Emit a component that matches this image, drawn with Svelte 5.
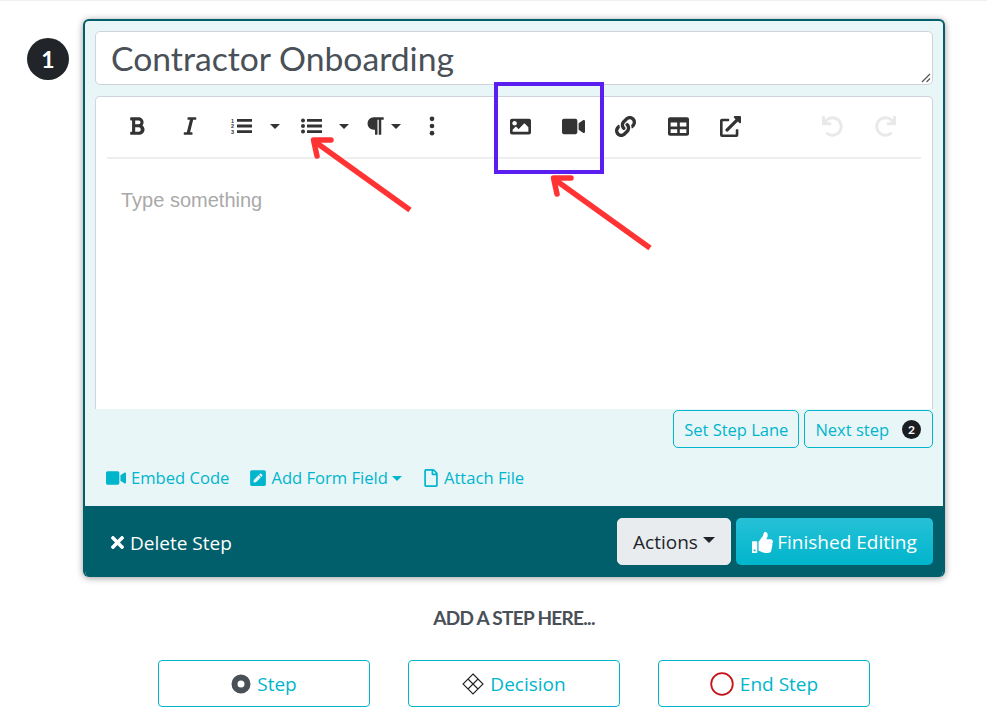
<script lang="ts">
	const addButtons = [
		{ label: "Step", kind: "step" },
		{ label: "Decision", kind: "decision" },
		{ label: "End Step", kind: "end" }
	];
</script>

{#snippet fa(cls: string, box: string, d: string)}
	<svg class={cls} viewBox={box} aria-hidden="true"><path fill="currentColor" d={d} /></svg>
{/snippet}

{#snippet video(cls: string)}
	{@render fa(cls, "0 0 576 512", "M336.2 64H47.8C21.4 64 0 85.4 0 111.8v288.4C0 426.6 21.4 448 47.8 448h288.4c26.4 0 47.8-21.4 47.8-47.8V111.8c0-26.4-21.4-47.8-47.8-47.8zm189.4 37.7L416 177.3v157.4l109.6 75.5c21.2 14.6 50.4-.3 50.4-25.8V127.5c0-25.4-29.1-40.4-50.4-25.8z")}
{/snippet}

<div class="page">
	<div class="step-row">
		<div class="step-num">1</div>
		<div class="card">
			<div class="card-body">
				<div class="title-box">
					<span class="title">Contractor Onboarding</span>
					<svg class="grip" viewBox="0 0 10 10" aria-hidden="true">
						<path d="M1 9 9 1M5.5 9 9 5.5" stroke="#555" stroke-width="1.2" fill="none" />
					</svg>
				</div>
				<div class="editor">
					<div class="toolbar">
						<span class="tb">{@render fa("ic", "0 0 384 512", "M333.49 238a122 122 0 0 0 27-65.21C367.87 96.49 308 32 233.42 32H34a16 16 0 0 0-16 16v48a16 16 0 0 0 16 16h31.87v288H34a16 16 0 0 0-16 16v48a16 16 0 0 0 16 16h209.32c70.8 0 134.14-51.75 141-122.4 4.74-48.45-16.39-90.89-50.83-117.6zM145.66 112h87.76a48 48 0 0 1 0 96h-87.76zm87.76 288h-87.76V288h87.76a56 56 0 0 1 0 112z")}</span>
						<span class="tb">{@render fa("ic", "0 0 320 512", "M320 48v32a16 16 0 0 1-16 16h-62.76l-80 320H208a16 16 0 0 1 16 16v32a16 16 0 0 1-16 16H16a16 16 0 0 1-16-16v-32a16 16 0 0 1 16-16h62.76l80-320H112a16 16 0 0 1-16-16V48a16 16 0 0 1 16-16h192a16 16 0 0 1 16 16z")}</span>
						<span class="tb tb-ol">
							<svg class="ic-list" viewBox="0 0 21 16" aria-hidden="true">
								<text x="0" y="5" class="nums">1</text>
								<text x="0" y="10.4" class="nums">2</text>
								<text x="0" y="15.8" class="nums">3</text>
								<path d="M6 1h15v2.800H6zM6 6.600h15v2.800H6zM6 12.200h15v2.800H6z" fill="currentColor" />
							</svg>
							<i class="tb-caret"></i>
						</span>
						<span class="tb tb-ul">
							<svg class="ic-list" viewBox="0 0 21 16" aria-hidden="true">
								<path d="M6 1h15v2.800H6zM6 6.600h15v2.800H6zM6 12.200h15v2.800H6z" fill="currentColor" />
								<circle cx="2" cy="2.400" r="2" fill="currentColor" />
								<circle cx="2" cy="8" r="2" fill="currentColor" />
								<circle cx="2" cy="13.600" r="2" fill="currentColor" />
							</svg>
							<i class="tb-caret"></i>
						</span>
						<span class="tb tb-p">
							{@render fa("ic", "0 0 448 512", "M448 48v32a16 16 0 0 1-16 16h-48v368a16 16 0 0 1-16 16h-32a16 16 0 0 1-16-16V96h-32v368a16 16 0 0 1-16 16h-32a16 16 0 0 1-16-16V352h-32a160 160 0 0 1 0-320h240a16 16 0 0 1 16 16z")}
							<i class="tb-caret"></i>
						</span>
						<span class="tb tb-dots">
							<svg class="ic" viewBox="0 0 192 512" aria-hidden="true">
								<circle cx="96" cy="72" r="60" fill="currentColor" />
								<circle cx="96" cy="256" r="60" fill="currentColor" />
								<circle cx="96" cy="440" r="60" fill="currentColor" />
							</svg>
						</span>
						<span class="tb">{@render fa("ic-wide", "0 0 512 512", "M464 448H48c-26.51 0-48-21.49-48-48V112c0-26.51 21.49-48 48-48h416c26.51 0 48 21.49 48 48v288c0 26.51-21.49 48-48 48zM112 120c-30.928 0-56 25.072-56 56s25.072 56 56 56 56-25.072 56-56-25.072-56-56-56zM64 384h384V272l-87.515-87.515c-4.686-4.686-12.284-4.686-16.971 0L208 320l-55.515-55.515c-4.686-4.686-12.284-4.686-16.971 0L64 336v48z")}</span>
						<span class="tb">{@render video("ic-video")}</span>
						<span class="tb">{@render fa("ic-wide", "0 0 512 512", "M326.612 185.391c59.747 59.809 58.927 155.698.36 214.59-.11.12-.24.25-.36.37l-67.2 67.2c-59.27 59.27-155.699 59.262-214.96 0-59.27-59.26-59.27-155.7 0-214.96l37.106-37.106c9.84-9.84 26.786-3.3 27.294 10.606.648 17.722 3.826 35.527 9.69 52.721 1.986 5.822.567 12.262-3.783 16.612l-13.087 13.087c-28.026 28.026-28.905 73.66-1.155 101.96 28.024 28.579 74.086 28.749 102.325.51l67.2-67.19c28.191-28.191 28.073-73.757 0-101.83-3.701-3.694-7.429-6.564-10.341-8.569a16.037 16.037 0 0 1-6.947-12.606c-.396-10.567 3.348-21.456 11.698-29.806l21.054-21.055c5.521-5.521 14.182-6.199 20.584-1.731a152.482 152.482 0 0 1 20.522 17.197zM467.547 44.449c-59.261-59.262-155.69-59.27-214.96 0l-67.2 67.2c-.12.12-.25.25-.36.37-58.566 58.892-59.387 154.781.36 214.59a152.454 152.454 0 0 0 20.521 17.196c6.402 4.468 15.064 3.789 20.584-1.731l21.054-21.055c8.35-8.35 12.094-19.239 11.698-29.806a16.037 16.037 0 0 0-6.947-12.606c-2.912-2.005-6.64-4.875-10.341-8.569-28.073-28.073-28.191-73.639 0-101.83l67.2-67.19c28.239-28.239 74.3-28.069 102.325.51 27.75 28.3 26.872 73.934-1.155 101.96l-13.087 13.087c-4.35 4.35-5.769 10.79-3.783 16.612 5.864 17.194 9.042 34.999 9.69 52.721.509 13.906 17.454 20.446 27.294 10.606l37.106-37.106c59.271-59.259 59.271-155.699.001-214.959z")}</span>
						<span class="tb">{@render fa("ic-wide", "0 0 512 512", "M464 32H48C21.49 32 0 53.49 0 80v352c0 26.51 21.49 48 48 48h416c26.51 0 48-21.49 48-48V80c0-26.51-21.49-48-48-48zM224 416H64v-96h160v96zm0-160H64v-96h160v96zm224 160H288v-96h160v96zm0-160H288v-96h160v96z")}</span>
						<span class="tb">{@render fa("ic-wide", "0 0 512 512", "M432,320H400a16,16,0,0,0-16,16V448H64V128H208a16,16,0,0,0,16-16V80a16,16,0,0,0-16-16H48A48,48,0,0,0,0,112V464a48,48,0,0,0,48,48H400a48,48,0,0,0,48-48V336A16,16,0,0,0,432,320ZM488,0h-128c-21.37,0-32.05,25.91-17,41l35.73,35.73L135,320.37a24,24,0,0,0,0,34L157.67,377a24,24,0,0,0,34,0L435.28,133.32,471,169c15,15,41,4.5,41-17V24A24,24,0,0,0,488,0Z")}</span>
						<span class="tb tb-off tb-undo">{@render fa("ic-wide", "0 0 512 512", "M212.333 224.333H12c-6.627 0-12-5.373-12-12V12C0 5.373 5.373 0 12 0h48c6.627 0 12 5.373 12 12v78.112C117.773 39.279 184.26 7.47 258.175 8.007c136.906.994 246.448 111.623 246.157 248.532C504.041 393.258 393.12 504 256.333 504c-64.089 0-122.496-24.313-166.51-64.215-5.099-4.622-5.334-12.554-.467-17.42l33.967-33.967c4.474-4.474 11.662-4.717 16.401-.525C170.76 415.336 211.58 432 256.333 432c97.268 0 176-78.716 176-176 0-97.267-78.716-176-176-176-58.496 0-110.28 28.476-142.274 72.333h98.274c6.627 0 12 5.373 12 12v48c0 6.627-5.373 12-12 12z")}</span>
						<span class="tb tb-off tb-redo">{@render fa("ic-wide", "0 0 512 512", "M212.333 224.333H12c-6.627 0-12-5.373-12-12V12C0 5.373 5.373 0 12 0h48c6.627 0 12 5.373 12 12v78.112C117.773 39.279 184.26 7.47 258.175 8.007c136.906.994 246.448 111.623 246.157 248.532C504.041 393.258 393.12 504 256.333 504c-64.089 0-122.496-24.313-166.51-64.215-5.099-4.622-5.334-12.554-.467-17.42l33.967-33.967c4.474-4.474 11.662-4.717 16.401-.525C170.76 415.336 211.58 432 256.333 432c97.268 0 176-78.716 176-176 0-97.267-78.716-176-176-176-58.496 0-110.28 28.476-142.274 72.333h98.274c6.627 0 12 5.373 12 12v48c0 6.627-5.373 12-12 12z")}</span>
					</div>
					<div class="placeholder">Type something</div>
				</div>
				<div class="step-actions">
					<button class="btn-line">Set Step Lane</button>
					<button class="btn-line btn-next">Next step <span class="next-num">2</span></button>
				</div>
				<div class="links">
					<span class="link">{@render video("link-video")}Embed Code</span>
					<span class="link">
						{@render fa("link-ic", "0 0 448 512", "M400 480H48c-26.5 0-48-21.5-48-48V80c0-26.5 21.5-48 48-48h352c26.5 0 48 21.5 48 48v352c0 26.5-21.5 48-48 48zM238.1 177.9L102.4 313.6l-6.3 57.1c-.8 7.6 5.6 14.1 13.3 13.3l57.1-6.3L302.2 242c2.3-2.3 2.3-6.1 0-8.5L246.7 178c-2.5-2.4-6.3-2.4-8.6-.1zM345 165.1L314.9 135c-9.4-9.4-24.6-9.4-33.9 0l-23.1 23.1c-2.3 2.3-2.3 6.1 0 8.5l55.5 55.5c2.3 2.3 6.1 2.3 8.5 0L345 199c9.3-9.3 9.3-24.5 0-33.9z")}
						Add Form Field<i class="link-caret"></i>
					</span>
					<span class="link">
						{@render fa("link-ic", "0 0 384 512", "M369.9 97.9L286 14C277 5 264.8-.1 252.1-.1H48C21.5 0 0 21.5 0 48v416c0 26.5 21.5 48 48 48h288c26.5 0 48-21.5 48-48V131.9c0-12.7-5.1-25-14.1-34zM332.1 128H256V51.9l76.1 76.1zM48 464V48h160v104c0 13.3 10.7 24 24 24h104v288H48z")}
						Attach File
					</span>
				</div>
			</div>
			<div class="card-foot">
				<span class="delete">
					{@render fa("del-ic", "0 0 352 512", "M242.72 256l100.07-100.07c12.28-12.28 12.28-32.19 0-44.48l-22.24-22.24c-12.28-12.28-32.19-12.28-44.48 0L176 189.28 75.93 89.21c-12.28-12.28-32.19-12.28-44.48 0L9.21 111.45c-12.28 12.28-12.28 32.19 0 44.48L109.28 256 9.21 356.07c-12.28 12.28-12.28 32.19 0 44.48l22.24 22.24c12.28 12.28 32.2 12.28 44.48 0L176 322.72l100.07 100.07c12.28 12.28 32.2 12.28 44.48 0l22.24-22.24c12.28-12.28 12.28-32.19 0-44.48L242.72 256z")}
					Delete Step
				</span>
				<div class="foot-btns">
					<button class="btn-actions">Actions<i class="act-caret"></i></button>
					<button class="btn-finish">
						{@render fa("thumb", "0 0 512 512", "M104 224H24c-13.255 0-24 10.745-24 24v240c0 13.255 10.745 24 24 24h80c13.255 0 24-10.745 24-24V248c0-13.255-10.745-24-24-24zM64 472c-13.255 0-24-10.745-24-24s10.745-24 24-24 24 10.745 24 24-10.745 24-24 24zM384 81.452c0 42.416-25.97 66.208-33.277 94.548h101.723c33.397 0 59.397 27.746 59.553 58.098.084 17.938-7.546 37.249-19.439 49.197l-.11.11c9.836 23.337 8.237 56.037-9.308 79.469 8.681 25.895-.069 57.704-16.382 74.757 4.298 17.598 2.244 32.575-6.148 44.632C440.202 511.587 389.616 512 346.839 512l-2.845-.001c-48.287-.017-87.806-17.598-119.56-31.725-15.957-7.099-36.821-15.887-52.651-16.178-6.54-.12-11.783-5.457-11.783-11.998v-213.77c0-3.2 1.282-6.271 3.558-8.521 39.614-39.144 56.648-80.587 89.117-113.111 14.804-14.832 20.188-37.236 25.393-58.902C282.515 39.293 291.817 0 312 0c24 0 72 8 72 81.452z")}
						Finished Editing
					</button>
				</div>
			</div>
		</div>
	</div>

	<div class="add-label">ADD A STEP HERE...</div>
	<div class="add-row">
		{#each addButtons as b}
			<button class="btn-add">
				{#if b.kind === "step"}
					<svg class="add-ic" viewBox="0 0 20 20" aria-hidden="true"><circle cx="10" cy="10" r="6.5" fill="none" stroke="#495057" stroke-width="6" /></svg>
				{:else if b.kind === "decision"}
					<svg class="add-ic add-ic-d" viewBox="0 0 22 22" aria-hidden="true">
						<path d="M11 1 21 11 11 21 1 11ZM6 6l10 10M16 6 6 16" fill="none" stroke="#222" stroke-width="1.1" />
					</svg>
				{:else}
					<svg class="add-ic add-ic-e" viewBox="0 0 24 24" aria-hidden="true"><circle cx="12" cy="12" r="10.800" fill="none" stroke="#c8131b" stroke-width="1.800" /></svg>
				{/if}
				{b.label}
			</button>
		{/each}
	</div>

	<svg class="notes" viewBox="0 0 987 717" aria-hidden="true">
		<rect x="496" y="84" width="106" height="88" fill="none" stroke="#5a1ff0" stroke-width="4" />
		<g fill="none" stroke="#ff3333" stroke-width="5.500" stroke-linejoin="round">
			<path d="M410 210 314 141" />
			<path d="M650 248 554 179" />
			<g stroke-linecap="round">
				<path d="M331 140H313.500L317 156" />
				<path d="M571 178H553.500L557 194" />
			</g>
		</g>
	</svg>
</div>

<style>
	:global(body) {
		background: #fff;
	}

	.page {
		position: relative;
		width: 987px;
		height: 717px;
		overflow: hidden;
		box-sizing: border-box;
		padding-top: 19px;
		border-top: 1px solid #f0f0f0;
		font-family: "Open Sans", sans-serif;
		font-size: 16.6px;
		color: #495057;
	}

	.step-row {
		display: flex;
		align-items: flex-start;
		padding-left: 27px;
		gap: 14px;
		margin-top: -1px;
	}

	.step-num {
		flex: none;
		width: 42px;
		height: 42px;
		margin-top: 19px;
		border-radius: 50%;
		background: #212529;
		color: #fff;
		font-family: Lato, sans-serif;
		font-weight: 700;
		font-size: 23px;
		display: flex;
		align-items: center;
		justify-content: center;
	}

	.card {
		width: 862px;
		height: 558px;
		box-sizing: border-box;
		display: flex;
		flex-direction: column;
		background: #e8f6f8;
		border: 2px solid #005f6b;
		border-bottom: 0;
		border-radius: 6px;
		box-shadow: 0 1px 7px rgba(0, 0, 0, 0.4);
		overflow: hidden;
	}

	.card-body {
		flex: 1;
		padding: 10px 10px 0;
		display: flex;
		flex-direction: column;
	}

	.title-box {
		position: relative;
		height: 54px;
		box-sizing: border-box;
		background: #fff;
		border: 1px solid #ced4da;
		border-radius: 5px;
		padding-left: 15px;
		display: flex;
		align-items: center;
	}

	.title {
		font-family: Lato, sans-serif;
		font-size: 33.700px;
		color: #495057;
	}

	.grip {
		position: absolute;
		right: 1px;
		bottom: 1px;
		width: 10px;
		height: 10px;
	}

	.editor {
		margin-top: 11px;
		height: 313px;
		box-sizing: border-box;
		background: #fff;
		border: 1px solid #ced4da;
		border-bottom: 0;
		border-radius: 5px 5px 0 0;
		padding: 0 11px;
	}

	.toolbar {
		display: flex;
		align-items: center;
		height: 62px;
		box-sizing: border-box;
		border-bottom: 2px solid #eee;
		padding: 0 0 2px 4px;
		color: #333;
	}

	.tb {
		flex: none;
		width: 52.500px;
		height: 100%;
		display: flex;
		align-items: center;
		justify-content: center;
		gap: 6px;
	}

	.tb-ol {
		width: 76px;
		padding-left: 3px;
		box-sizing: border-box;
		gap: 18px;
	}

	.tb-ul {
		width: 69px;
		gap: 17px;
		margin-left: -2px;
	}

	.tb-p {
		width: 48px;
	}

	.tb-dots {
		margin-left: -1px;
		margin-right: 36px;
	}

	.tb-undo {
		margin-left: 49.500px;
	}

	.tb-off {
		color: #e9e9e9;
	}

	.tb-redo :global(svg) {
		transform: scaleX(-1);
	}

	.tb :global(.ic) {
		width: 20px;
		height: 20px;
	}

	.tb :global(.ic-wide) {
		width: 21px;
		height: 21px;
	}

	.tb :global(.ic-video) {
		width: 23px;
		height: 21px;
	}

	.ic-list {
		flex: none;
		width: 21px;
		height: 16px;
	}

	.nums {
		font-family: "Liberation Sans", sans-serif;
		font-size: 5.500px;
		font-weight: 700;
		fill: currentColor;
	}

	.tb-caret {
		width: 0;
		height: 0;
		border-top: 5px solid #333;
		border-left: 5px solid transparent;
		border-right: 5px solid transparent;
	}

	.placeholder {
		margin-top: 29px;
		padding-left: 14px;
		font-family: "Liberation Sans", sans-serif;
		font-size: 20px;
		line-height: 24px;
		color: #a9a9a9;
	}

	.step-actions {
		display: flex;
		justify-content: flex-end;
		gap: 5px;
		margin-top: 1px;
	}

	button {
		font-family: inherit;
		cursor: pointer;
	}

	.btn-line {
		height: 38px;
		box-sizing: border-box;
		padding: 0 10px;
		background: transparent;
		border: 1px solid #00b5cc;
		border-radius: 5px;
		color: #00b5cc;
		font-size: 16.500px;
	}

	.btn-next {
		display: flex;
		align-items: center;
		padding: 0 11px 0 10px;
	}

	.next-num {
		margin-left: 13px;
		width: 19px;
		height: 19px;
		border-radius: 50%;
		background: #1a1d21;
		color: #fff;
		font-family: Lato, sans-serif;
		font-size: 12px;
		font-weight: 700;
		display: flex;
		align-items: center;
		justify-content: center;
	}

	.links {
		display: flex;
		gap: 21px;
		margin-top: 18px;
		padding-left: 11px;
		color: #00b5cc;
		line-height: 24px;
	}

	.link {
		display: flex;
		align-items: center;
	}

	.link :global(.link-video) {
		width: 20px;
		height: 18px;
		margin-right: 5px;
	}

	.link :global(.link-ic) {
		width: 16px;
		height: 18px;
		margin-right: 5px;
	}

	.link-caret {
		margin-left: 4px;
		border-top: 5px solid #00b5cc;
		border-left: 5px solid transparent;
		border-right: 5px solid transparent;
	}

	.card-foot {
		height: 71px;
		flex: none;
		box-sizing: border-box;
		background: #005f6b;
		display: flex;
		align-items: flex-start;
		justify-content: space-between;
		padding: 12px 10px 0 24px;
		color: #fff;
		font-size: 19px;
	}

	.delete {
		display: flex;
		align-items: center;
		height: 49px;
		gap: 4px;
	}

	.delete :global(.del-ic) {
		width: 17px;
		height: 19px;
	}

	.foot-btns {
		display: flex;
		gap: 5px;
	}

	.btn-actions {
		width: 114px;
		height: 47px;
		padding-top: 2px;
		background: #e9ecef;
		border: 1px solid #e9ecef;
		border-radius: 5px;
		color: #212529;
		font-size: 19px;
		display: flex;
		align-items: center;
		justify-content: center;
	}

	.act-caret {
		margin-left: 5px;
		margin-top: -4px;
		border-top: 6px solid #212529;
		border-left: 6px solid transparent;
		border-right: 6px solid transparent;
	}

	.btn-finish {
		width: 197px;
		height: 47px;
		padding-top: 2px;
		border: 0;
		border-radius: 5px;
		background: linear-gradient(180deg, #26c1d6, #00b5cc);
		color: #fff;
		font-size: 19px;
		display: flex;
		align-items: center;
		justify-content: center;
		gap: 4px;
	}

	.btn-finish :global(.thumb) {
		width: 21px;
		height: 21px;
	}

	.add-label {
		margin-top: 29px;
		text-align: center;
		font-family: Lato, sans-serif;
		font-size: 19px;
		font-weight: 700;
		letter-spacing: -0.7px;
		line-height: 24px;
		color: #495057;
		padding-left: 41px;
	}

	.add-row {
		display: flex;
		gap: 38px;
		margin-top: 30px;
		padding-left: 158px;
	}

	.btn-add {
		width: 212px;
		height: 47px;
		background: #fff;
		border: 1px solid #00b5cc;
		border-radius: 4px;
		color: #00b5cc;
		font-size: 19px;
		display: flex;
		align-items: center;
		justify-content: center;
		gap: 6px;
	}

	.add-ic {
		width: 20px;
		height: 20px;
	}

	.add-ic-d {
		width: 22px;
		height: 22px;
	}

	.add-ic-e {
		width: 24px;
		height: 24px;
	}

	.notes {
		position: absolute;
		left: 0;
		top: -1px;
		width: 987px;
		height: 717px;
		pointer-events: none;
	}
</style>
